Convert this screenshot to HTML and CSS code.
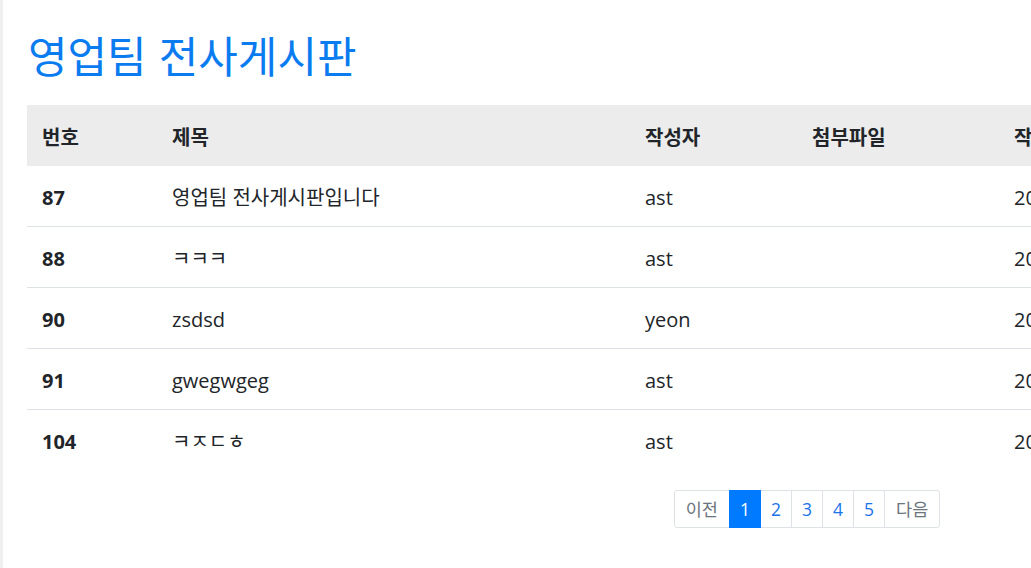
FILE: index.html
```html
<!DOCTYPE html>
<html lang="ko">
<head>
<meta charset="utf-8">
<title>영업팀 전사게시판</title>
<link rel="stylesheet" href="styles.css">
</head>
<body>
<div class="page">
  <h2 class="title">영업팀 전사게시판</h2>
  <table class="board">
    <colgroup>
      <col class="c-no"><col class="c-title"><col class="c-author"><col class="c-file"><col class="c-date">
    </colgroup>
    <thead>
      <tr><th>번호</th><th>제목</th><th>작성자</th><th>첨부파일</th><th>작성일</th></tr>
    </thead>
    <tbody>
      <tr><td class="num">87</td><td>영업팀 전사게시판입니다</td><td>ast</td><td></td><td>2021-03-15</td></tr>
      <tr><td class="num">88</td><td>ㅋㅋㅋ</td><td>ast</td><td></td><td>2021-03-15</td></tr>
      <tr><td class="num">90</td><td>zsdsd</td><td>yeon</td><td></td><td>2021-03-16</td></tr>
      <tr><td class="num">91</td><td>gwegwgeg</td><td>ast</td><td></td><td>2021-03-16</td></tr>
      <tr><td class="num">104</td><td>ㅋㅈㄷㅎ</td><td>ast</td><td></td><td>2021-03-17</td></tr>
    </tbody>
  </table>
  <nav class="pager">
    <ul class="pagination">
      <li class="item"><a class="link muted" href="#">이전</a></li>
      <li class="item"><a class="link active" href="#">1</a></li>
      <li class="item"><a class="link" href="#">2</a></li>
      <li class="item"><a class="link" href="#">3</a></li>
      <li class="item"><a class="link" href="#">4</a></li>
      <li class="item"><a class="link" href="#">5</a></li>
      <li class="item"><a class="link muted" href="#">다음</a></li>
    </ul>
  </nav>
</div>
</body>
</html>
```

FILE: styles.css
```css
html, body {
  margin: 0;
  padding: 0;
  overflow: hidden;
  background: #fff;
}
body {
  min-height: 568px;
  box-sizing: border-box;
  border-left: 3px solid #efefef;
  font-family: "Open Sans", "Noto Sans CJK KR", sans-serif;
  font-size: 20px;
  line-height: 30px;
  color: #212529;
}
.page {
  width: 1560px;
  padding: 30px 0 0 24px;
}
.title {
  margin: 0 0 27px 1px;
  font-family: "Noto Sans CJK KR", sans-serif;
  font-weight: 400;
  font-size: 43px;
  line-height: 48px;
  color: #0a7cf0;
}
.board {
  width: 1560px;
  border-collapse: collapse;
  table-layout: fixed;
}
.c-no { width: 130px; }
.c-title { width: 473px; }
.c-author { width: 167px; }
.c-file { width: 202px; }
.board th, .board td {
  padding: 17px 15px 13px 15px;
  text-align: left;
  vertical-align: top;
  white-space: nowrap;
}
.board th {
  background: #ececec;
  font-weight: 700;
  padding-bottom: 14px;
}
.board thead th {
  font-family: "Noto Sans CJK KR", sans-serif;
}
.board td {
  border-top: 1px solid #dee2e6;
}
.board tbody tr:first-child td {
  border-top: 0;
}
.num {
  font-weight: 700;
}
.pager {
  display: flex;
  justify-content: center;
  margin-top: 20px;
}
.pagination {
  display: flex;
  list-style: none;
  margin: 0;
  padding: 0;
}
.link {
  display: block;
  padding: 5px 10px;
  font-size: 17.5px;
  line-height: 26px;
  color: #1a73e8;
  text-decoration: none;
  border: 1px solid #dee2e6;
  margin-left: -1px;
  background: #fff;
}
.item:first-child .link {
  margin-left: 0;
  padding: 5px 11px;
  border-radius: 3px 0 0 3px;
}
.item:last-child .link {
  padding: 5px 11px;
  border-radius: 0 3px 3px 0;
}
.link.muted {
  color: #6c757d;
  font-family: "Noto Sans CJK KR", sans-serif;
}
.link.active {
  background: #007bff;
  border-color: #007bff;
  color: #fff;
  position: relative;
  z-index: 1;
}
```
